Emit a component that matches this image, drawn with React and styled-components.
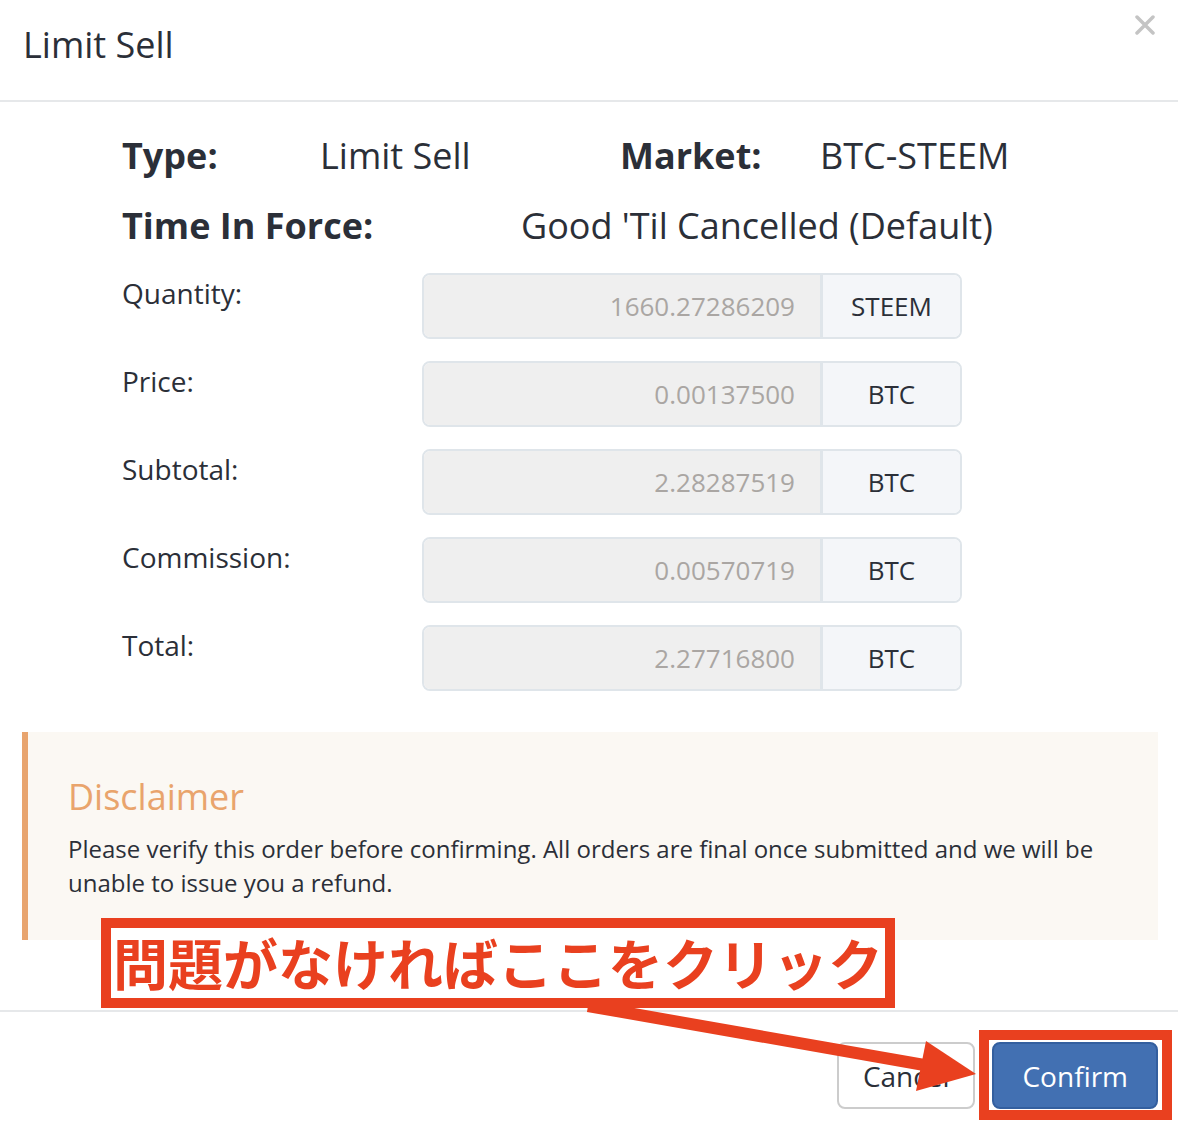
import React from "react";
import styled, { createGlobalStyle } from "styled-components";

const GlobalStyle = createGlobalStyle`
  html, body { margin: 0; padding: 0; background: #ffffff; }
  body {
    font-family: "Open Sans", "Noto Sans", sans-serif;
    color: #2b2f38;
  }
  * { box-sizing: border-box; }
`;

const Modal = styled.div`
  position: relative;
  width: 1178px;
  min-height: 1134px;
  background: #fff;
`;

const Header = styled.div`
  display: flex;
  justify-content: space-between;
  align-items: flex-start;
  height: 102px;
  padding: 19px 23px 0 23px;
  border-bottom: 2px solid #e6e8ea;
`;

const Title = styled.h4`
  margin: 0;
  font-size: 36px;
  font-weight: 400;
  line-height: 1.42857;
  color: #2b2f38;
`;

const Close = styled.button`
  border: 0;
  background: transparent;
  padding: 0;
  margin: -4px 0 0 0;
  width: 20px;
  height: 20px;
  cursor: pointer;
  display: flex;
`;

const Body = styled.div`
  padding: 19px 20px 0 22px;
`;

const Details = styled.div`
  padding-left: 100px;
`;

const SummaryRow = styled.div`
  display: grid;
  grid-template-columns: ${(p) => p.$cols};
  height: 70px;
  line-height: 70px;
  font-size: 36px;
  white-space: nowrap;
`;

const SummaryLabel = styled.div`
  font-weight: 700;
`;

const SummaryValue = styled.div`
  font-weight: 400;
`;

const FormList = styled.div`
  display: flex;
  flex-direction: column;
  gap: 22px;
  margin-top: 12px;
`;

const FormRow = styled.div`
  display: grid;
  grid-template-columns: 300px 540px;
  height: 66px;
`;

const FieldLabel = styled.div`
  font-size: 28px;
  line-height: 40px;
`;

const InputGroup = styled.div`
  display: flex;
  height: 66px;
  border: 2px solid #dfe5ea;
  border-radius: 8px;
  overflow: hidden;
`;

const Field = styled.div`
  flex: 1;
  background: #efefef;
  color: #aaa6a3;
  font-size: 26px;
  display: flex;
  align-items: center;
  justify-content: flex-end;
  padding-right: 25px;
  border-right: 3px solid #dfe5ea;
`;

const Addon = styled.div`
  width: 137px;
  background: #f4f6f9;
  color: #2b2f38;
  font-size: 26px;
  display: flex;
  align-items: center;
  justify-content: center;
`;

const Disclaimer = styled.div`
  margin-top: 41px;
  height: 208px;
  background: #fbf8f3;
  border-left: 6px solid #e8a46e;
  padding: 45px 40px 40px 40px;
`;

const DisclaimerTitle = styled.h4`
  margin: 0 0 15px 0;
  font-size: 36px;
  font-weight: 400;
  line-height: 40px;
  color: #e9a46c;
`;

const DisclaimerText = styled.p`
  margin: 0;
  font-size: 24px;
  line-height: 34px;
  color: #2b2f38;
`;

const Footer = styled.div`
  margin-top: 70px;
  border-top: 2px solid #e6e8ea;
  padding: 30px 20px 25px 20px;
  display: flex;
  justify-content: flex-end;
  gap: 17px;
`;

const Button = styled.button`
  height: 67px;
  padding: 0 ${(p) => (p.$primary ? "28px" : "24px")};
  font-family: "Open Sans", sans-serif;
  font-size: 28px;
  border-radius: 8px;
  border: 2px solid ${(p) => (p.$primary ? "#335f9f" : "#cccccc")};
  background: ${(p) => (p.$primary ? "#4270b2" : "#ffffff")};
  color: ${(p) => (p.$primary ? "#ffffff" : "#2b2f38")};
  cursor: pointer;
`;

const Callout = styled.div`
  position: absolute;
  left: 101px;
  top: 918px;
  width: 794px;
  height: 90px;
  border: 10px solid #e9401f;
  background: #fff;
  display: flex;
  align-items: center;
  padding: 0 0 4px 2px;
  color: #e9401f;
  font-family: "Noto Sans CJK JP", sans-serif;
  font-weight: 700;
  font-size: 55px;
  line-height: 1;
  white-space: nowrap;
`;

const Highlight = styled.div`
  position: absolute;
  left: 979px;
  top: 1030px;
  width: 193px;
  height: 90px;
  border: 10px solid #e9401f;
  pointer-events: none;
`;

const ArrowLayer = styled.svg`
  position: absolute;
  left: 0;
  top: 0;
  pointer-events: none;
`;

const rows = [
  { label: "Quantity:", value: "1660.27286209", unit: "STEEM" },
  { label: "Price:", value: "0.00137500", unit: "BTC" },
  { label: "Subtotal:", value: "2.28287519", unit: "BTC" },
  { label: "Commission:", value: "0.00570719", unit: "BTC" },
  { label: "Total:", value: "2.27716800", unit: "BTC" },
];

export default function App() {
  return (
    <>
      <GlobalStyle />
      <Modal>
        <Header>
          <Title>Limit Sell</Title>
          <Close aria-label="close">
            <svg width="20" height="20" viewBox="0 0 20 20">
              <path d="M2 2 L18 18 M18 2 L2 18" stroke="#c4c4c4" strokeWidth="3.5" strokeLinecap="round" />
            </svg>
          </Close>
        </Header>
        <Body>
          <Details>
            <SummaryRow $cols="198px 300px 200px auto">
              <SummaryLabel>Type:</SummaryLabel>
              <SummaryValue>Limit Sell</SummaryValue>
              <SummaryLabel>Market:</SummaryLabel>
              <SummaryValue>BTC-STEEM</SummaryValue>
            </SummaryRow>
            <SummaryRow $cols="399px auto">
              <SummaryLabel>Time In Force:</SummaryLabel>
              <SummaryValue>Good 'Til Cancelled (Default)</SummaryValue>
            </SummaryRow>
            <FormList>
              {rows.map((r) => (
                <FormRow key={r.label}>
                  <FieldLabel>{r.label}</FieldLabel>
                  <InputGroup>
                    <Field>{r.value}</Field>
                    <Addon>{r.unit}</Addon>
                  </InputGroup>
                </FormRow>
              ))}
            </FormList>
          </Details>
          <Disclaimer>
            <DisclaimerTitle>Disclaimer</DisclaimerTitle>
            <DisclaimerText>
              Please verify this order before confirming. All orders are final once submitted and we will be
              unable to issue you a refund.
            </DisclaimerText>
          </Disclaimer>
        </Body>
        <Footer>
          <Button>Cancel</Button>
          <Button $primary>Confirm</Button>
        </Footer>
        <ArrowLayer width="1178" height="1134" viewBox="0 0 1178 1134">
          <line x1="588" y1="1006" x2="930" y2="1066" stroke="#e9401f" strokeWidth="12" />
          <polygon points="926,1041 976,1074 916,1091" fill="#e9401f" />
        </ArrowLayer>
        <Callout>問題がなければここをクリック</Callout>
        <Highlight />
      </Modal>
    </>
  );
}
